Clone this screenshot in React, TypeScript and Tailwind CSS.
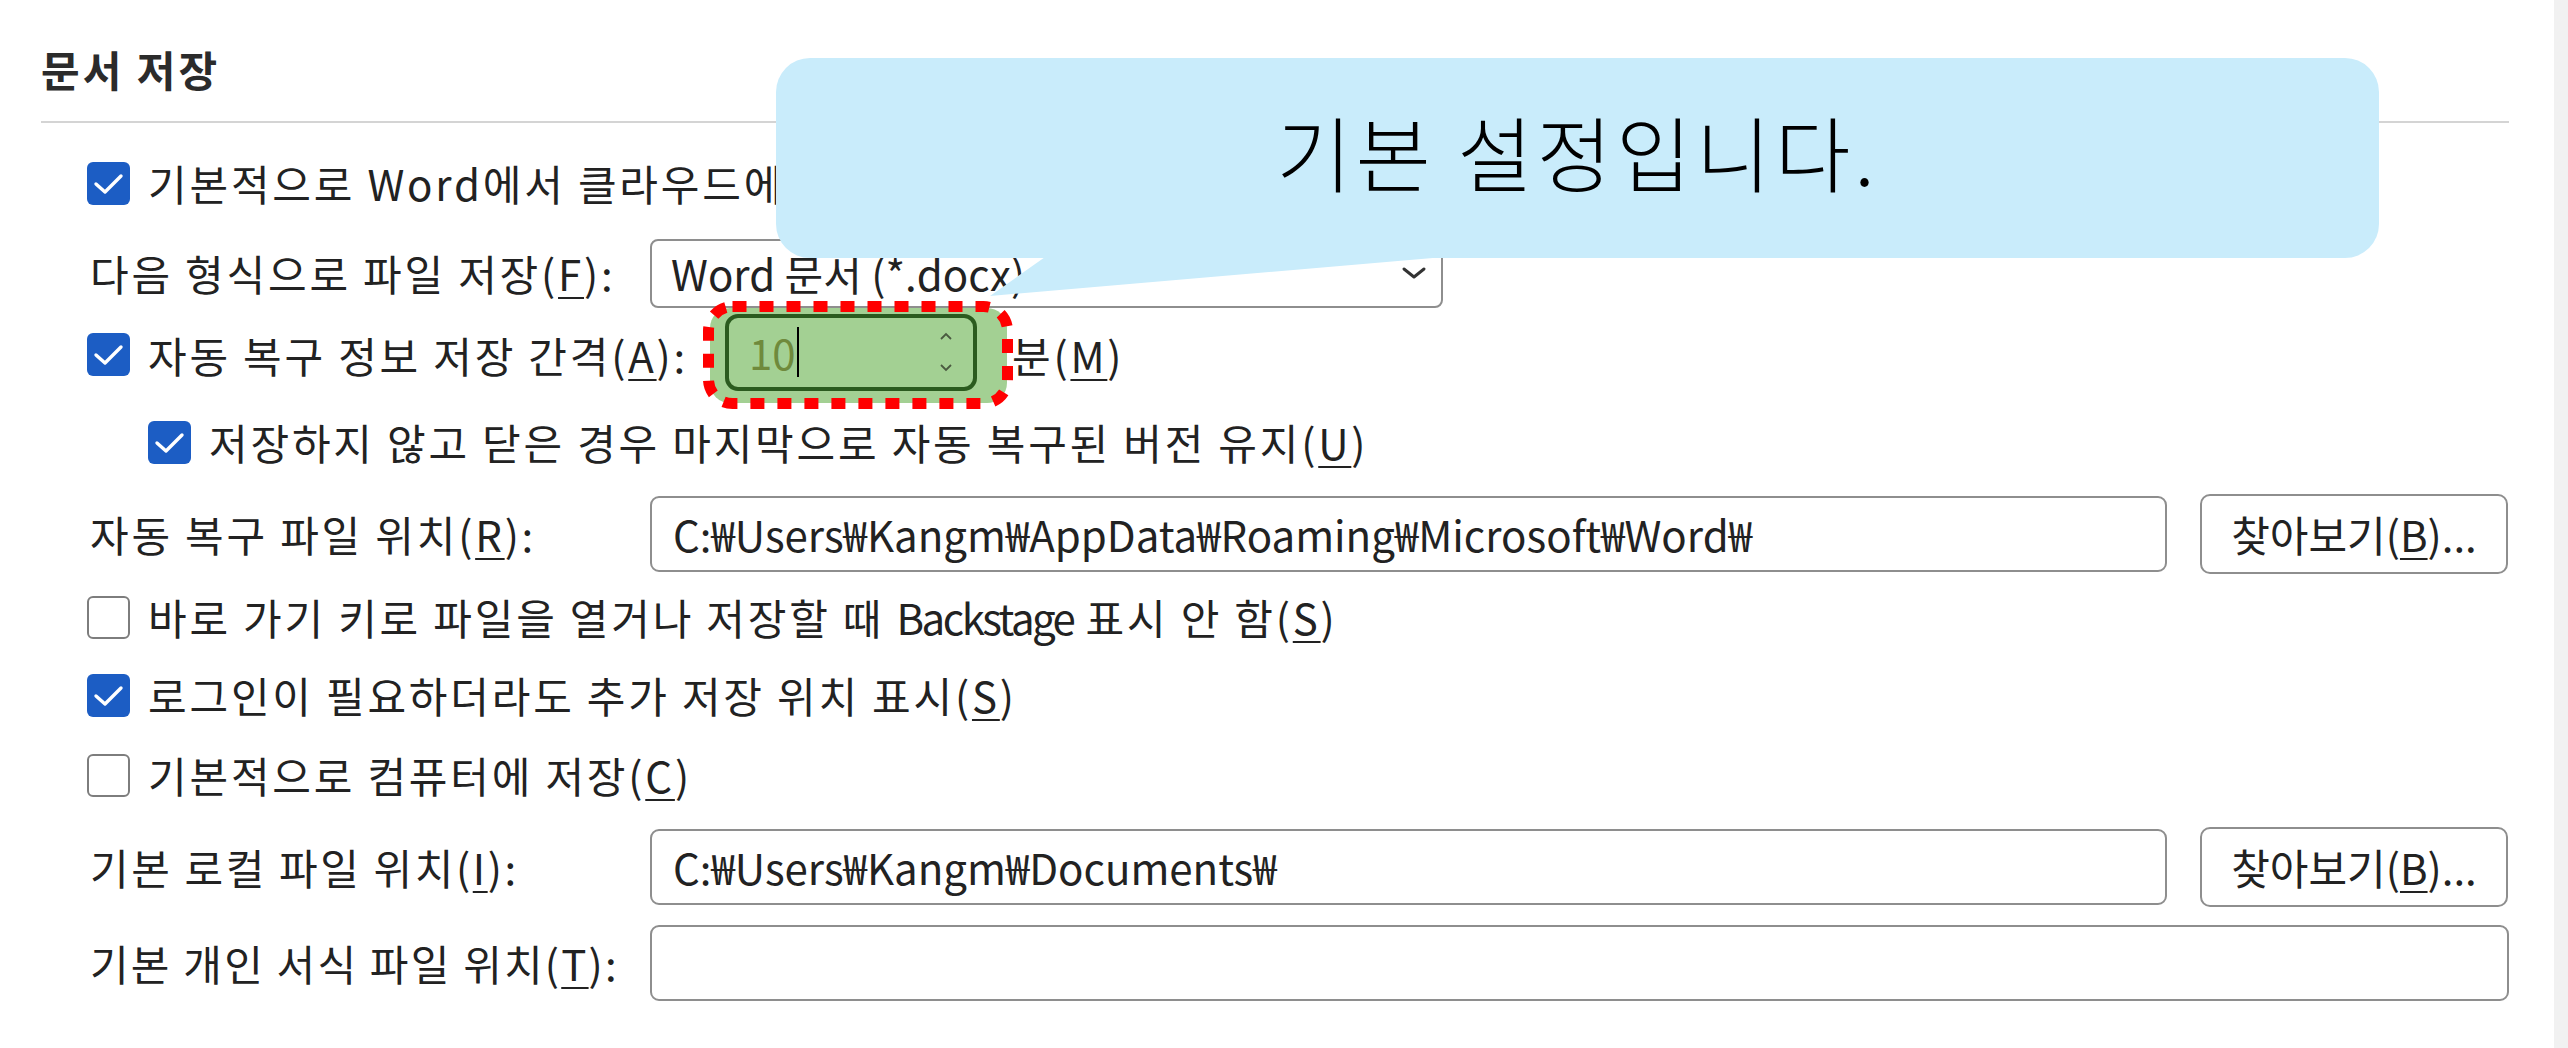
import React from "react";

const U = ({ c }: { c: string }) => (
  <span className="underline decoration-[2px] underline-offset-[6px]">{c}</span>
);

function Box({ checked }: { checked: boolean }) {
  if (checked) {
    return (
      <div className="w-[43px] h-[43px] shrink-0 rounded-[6px] bg-[#1c5dc4] flex items-center justify-center">
        <svg width="43" height="43" viewBox="0 0 43 43">
          <path d="M9 22 L18 30 L34 14" stroke="white" strokeWidth="3.4" fill="none" strokeLinecap="round" strokeLinejoin="round" />
        </svg>
      </div>
    );
  }
  return <div className="w-[43px] h-[43px] shrink-0 rounded-[6px] border-2 border-[#7d7d7d] bg-white" />;
}

function Field({ text, className }: { text?: string; className: string }) {
  return (
    <div className={`h-[76px] shrink-0 rounded-[9px] border-2 border-[#8e8e8e] bg-white flex items-center pl-[21px] ${className}`}>
      <span className="whitespace-nowrap">{text}</span>
    </div>
  );
}

function Browse() {
  return (
    <div className="ml-[33px] w-[308px] h-[80px] shrink-0 rounded-[10px] border-2 border-[#8e8e8e] bg-white flex items-center justify-center">
      <span className="whitespace-nowrap">
        찾아보기(<U c="B" />)...
      </span>
    </div>
  );
}

export default function App() {
  return (
    <div className="relative flex w-[2568px] h-[1048px] overflow-hidden bg-white text-[#222222] font-['Noto_Sans_CJK_KR','Noto_Sans',sans-serif] text-[42px] leading-[1.2]">
      <main className="flex-1 pl-[41px] pr-[45px]">
        <div className="h-[121px] pt-[44px]">
          <h1 className="text-[42px] leading-[50px] font-semibold tracking-[3px] text-[#2b2b2b]">문서 저장</h1>
        </div>
        <div className="h-[2px] bg-[#d4d4d4]" />
        <div className="pt-[20px] flex flex-col">
          {/* r1 */}
          <div className="h-[80px] flex items-center pl-[46px] gap-[18px]">
            <Box checked />
            <span className="whitespace-nowrap tracking-[2.8px]">기본적으로 Word에서 클라우드에 저장</span>
          </div>
          {/* r2 */}
          <div className="h-[100px] flex items-center pl-[49px]">
            <div className="w-[560px] shrink-0 whitespace-nowrap tracking-[2.8px]">
              다음 형식으로 파일 저장(<U c="F" />):
            </div>
            <div className="w-[793px] h-[69px] shrink-0 rounded-[8px] border-2 border-[#8e8e8e] bg-white flex items-center justify-between pl-[19px] pr-[14px]">
              <span className="whitespace-nowrap">Word 문서 (*.docx)</span>
              <svg width="26" height="14" viewBox="0 0 26 14">
                <polyline points="3,3 13,11 23,3" stroke="#333" strokeWidth="3" fill="none" strokeLinecap="round" strokeLinejoin="round" />
              </svg>
            </div>
          </div>
          {/* r3 */}
          <div className="h-[64px] flex items-center pl-[46px]">
            <div className="w-[623px] shrink-0 flex items-center gap-[18px]">
              <Box checked />
              <span className="whitespace-nowrap tracking-[2.8px]">
                자동 복구 정보 저장 간격(<U c="A" />):
              </span>
            </div>
            <div className="relative w-[297px] h-[95px] shrink-0 rounded-[20px] bg-[#a3d093] pl-[15px] pt-[6px]">
              <svg className="absolute left-[-7px] top-[-7px]" width="310" height="108" viewBox="0 0 310 108">
                <rect x="5.5" y="5.5" width="299" height="97" rx="24" fill="none" stroke="#ff0000" strokeWidth="11" strokeDasharray="14 13" />
              </svg>
              <div className="relative w-[252px] h-[77px] rounded-[13px] border-[4px] border-[#2b5b1f] flex items-center pl-[20px]">
                <span className="text-[#6f8a3c]">10</span>
                <span className="w-[2px] h-[50px] bg-black ml-[1px]" />
                <svg className="absolute right-[20px] top-[11px]" width="14" height="48" viewBox="0 0 14 48">
                  <polyline points="2,10 7,5 12,10" stroke="#4a5a40" strokeWidth="1.8" fill="none" />
                  <polyline points="2,36 7,41 12,36" stroke="#4a5a40" strokeWidth="1.8" fill="none" />
                </svg>
              </div>
            </div>
            <span className="ml-[5px] whitespace-nowrap tracking-[2.8px]">
              분(<U c="M" />)
            </span>
          </div>
          {/* r4 */}
          <div className="h-[110px] flex items-center pl-[107px] gap-[18px]">
            <Box checked />
            <span className="whitespace-nowrap tracking-[2.8px]">
              저장하지 않고 닫은 경우 마지막으로 자동 복구된 버전 유지(<U c="U" />)
            </span>
          </div>
          {/* r5 */}
          <div className="h-[74px] flex items-center pl-[49px]">
            <div className="w-[560px] shrink-0 whitespace-nowrap tracking-[2.8px]">
              자동 복구 파일 위치(<U c="R" />):
            </div>
            <Field className="w-[1517px]" text="C:₩Users₩Kangm₩AppData₩Roaming₩Microsoft₩Word₩" />
            <Browse />
          </div>
          {/* r6 */}
          <div className="h-[92px] flex items-center pl-[46px] gap-[18px]">
            <Box checked={false} />
            <span className="whitespace-nowrap tracking-[2.8px]">
              바로 가기 키로 파일을 열거나 저장할 때 <span className="tracking-[-2.5px]">Backstage</span> 표시 안 함(<U c="S" />)
            </span>
          </div>
          {/* r7 */}
          <div className="h-[64px] flex items-center pl-[46px] gap-[18px]">
            <Box checked />
            <span className="whitespace-nowrap tracking-[2.8px]">
              로그인이 필요하더라도 추가 저장 위치 표시(<U c="S" />)
            </span>
          </div>
          {/* r8 */}
          <div className="h-[96px] flex items-center pl-[46px] gap-[18px]">
            <Box checked={false} />
            <span className="whitespace-nowrap tracking-[2.8px]">
              기본적으로 컴퓨터에 저장(<U c="C" />)
            </span>
          </div>
          {/* r9 */}
          <div className="h-[88px] flex items-center pl-[49px]">
            <div className="w-[560px] shrink-0 whitespace-nowrap tracking-[2.6px]">
              기본 로컬 파일 위치(<U c="I" />):
            </div>
            <Field className="w-[1517px] h-[74px]" text="C:₩Users₩Kangm₩Documents₩" />
            <Browse />
          </div>
          {/* r10 */}
          <div className="h-[104px] flex items-center pl-[49px]">
            <div className="w-[560px] shrink-0 whitespace-nowrap tracking-[2.2px]">
              기본 개인 서식 파일 위치(<U c="T" />):
            </div>
            <Field className="flex-1 h-[74px]" />
          </div>
        </div>
      </main>
      <div className="w-[14px] shrink-0 bg-[#f1f1f1]" />

      {/* callout */}
      <div className="absolute left-[776px] top-[58px] w-[1603px] h-[200px] rounded-[34px] bg-[#c9ecfb] flex items-center justify-center pb-[14px]">
        <span className="text-[82px] leading-none font-light tracking-[4px] text-black whitespace-nowrap">기본 설정입니다.</span>
      </div>
      <svg className="absolute left-[980px] top-[250px]" width="560" height="50" viewBox="0 0 560 50">
        <polygon points="75,0 546,0 10,46" fill="#c9ecfb" />
      </svg>
    </div>
  );
}
